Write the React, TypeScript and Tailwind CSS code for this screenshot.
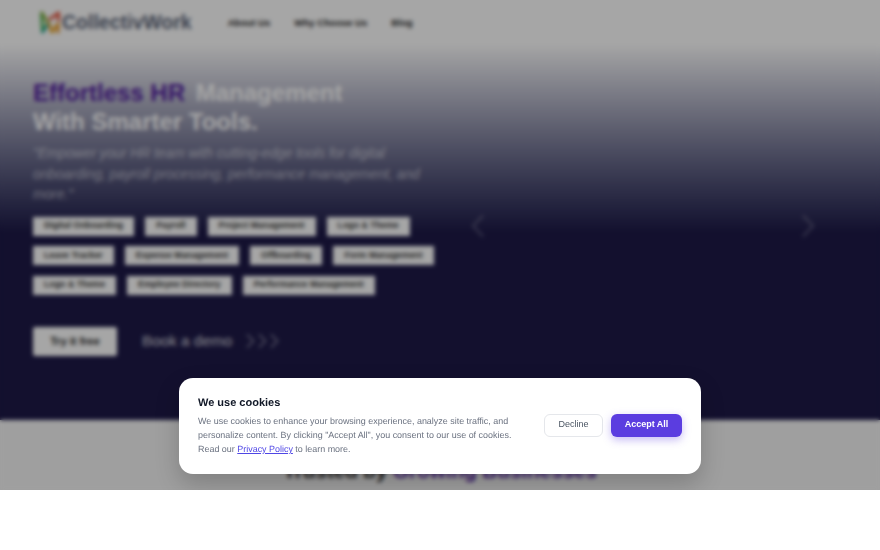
import React from "react";

const rows = [
  ["Digital Onboarding", "Payroll", "Project Management", "Logo & Theme"],
  ["Leave Tracker", "Expense Management", "Offboarding", "Form Management"],
  ["Logo & Theme", "Employee Directory", "Performance Management"],
];

function Logo() {
  return (
    <svg width="22" height="25" viewBox="0 0 22 25" fill="none" strokeWidth="3" strokeLinecap="round" strokeLinejoin="round">
      <path d="M2.5 3 L3.5 21" stroke="#4cb050" />
      <path d="M3.5 22 L9 14" stroke="#21a58f" />
      <path d="M3 3 L10 14" stroke="#8fae45" />
      <path d="M10 14 L13 22" stroke="#e0a030" />
      <path d="M13 22 L19 14" stroke="#eaa92f" />
      <path d="M19 14 L19 22" stroke="#e89a35" />
      <path d="M11 9 L19.5 3" stroke="#e2553f" />
      <path d="M19.5 3 L19.5 10" stroke="#e2553f" />
    </svg>
  );
}

function BigChevron({ flip }: { flip?: boolean }) {
  return (
    <svg width="14" height="26" viewBox="0 0 14 26" fill="none" stroke="currentColor" strokeWidth="2" className={flip ? "rotate-180" : ""}>
      <path d="M12 2.5 L2 13 L12 23.5" />
    </svg>
  );
}

export default function App() {
  return (
    <div className="min-h-[550px] bg-white font-['Liberation_Sans',Arial,sans-serif]">
      <div className="relative h-[490px] overflow-hidden bg-[#f5f5f5]">
        <header className="flex h-[44px] items-center bg-white pl-[39px]">
          <Logo />
          <span className="ml-px mt-px text-[19.5px] font-bold text-[#5b6478]">CollectivWork</span>
          <nav className="ml-9 mt-[3px] flex gap-6 text-[9.6px] font-bold text-[#222]">
            <span>About Us</span>
            <span>Why Choose Us</span>
            <span>Blog</span>
          </nav>
        </header>

        <section className="h-[376px] bg-gradient-to-b from-white from-0% to-[#1e1a48] to-[50%] pl-[33px] pt-[34px]">
          <div className="flex">
            <div className="w-[402px]">
              <h1 className="text-[24px] font-bold leading-[29px] text-white">
                <span className="mr-1 text-[#521fa0]">Effortless HR</span> Management
                <br />
                With Smarter Tools.
              </h1>
              <p className="mt-[8px] text-[13.75px] italic leading-[20.5px] text-white/60">
                "Empower your HR team with cutting-edge tools for digital onboarding, payroll processing, performance management, and more."
              </p>
              <div className="mt-[11px] flex flex-col gap-[10.5px]">
                {rows.map((row, i) => (
                  <div key={i} className="flex gap-[11px]">
                    {row.map((t) => (
                      <span key={t} className="flex h-[19px] items-center whitespace-nowrap bg-white px-[11px] text-[8.8px] font-bold text-[#333]">
                        {t}
                      </span>
                    ))}
                  </div>
                ))}
              </div>
              <div className="mt-[32px] flex items-center">
                <button className="h-[29px] w-[84px] rounded-[2px] bg-white text-[11px] font-bold text-[#222]">Try it free</button>
                <span className="ml-[25px] text-[15.3px] text-white/80">Book a demo</span>
                <span className="ml-[13px] flex text-white/50">
                  {[0, 1, 2].map((i) => (
                    <svg key={i} width="12" height="16" viewBox="0 0 12 16" fill="none" stroke="currentColor" strokeWidth="1.4">
                      <path d="M2 1.5 L8.5 8 L2 14.5" />
                    </svg>
                  ))}
                </span>
              </div>
            </div>
            <div className="ml-[36px] mt-[135px] flex h-[26px] w-[344px] justify-between text-white/25">
              <BigChevron />
              <BigChevron flip />
            </div>
          </div>
        </section>

        <section className="pt-[36px] text-center text-[20.6px] font-bold text-[#222]">
          Trusted by <span className="text-[#521fa0]">Growing Businesses</span>
        </section>

        <div className="absolute inset-0 bg-black/35 backdrop-blur-[2px]" />

        <div className="absolute left-[179px] top-[378px] flex h-[96px] w-[522px] items-center justify-between rounded-[14px] bg-white px-[19px] shadow-[0_10px_25px_rgba(0,0,0,0.2)] [text-rendering:geometricPrecision]">
          <div className="w-[322px]">
            <h2 className="text-[11px] font-bold leading-[14px] text-[#111827]">We use cookies</h2>
            <p className="mt-[4px] text-[8.95px] leading-[14px] text-[#6b7280]">
              We use cookies to enhance your browsing experience, analyze site traffic, and personalize content. By clicking "Accept All", you consent to our use of cookies. Read our{" "}
              <a className="text-[#4f46e5] underline">Privacy Policy</a> to learn more.
            </p>
          </div>
          <div className="mt-[-2px] flex gap-2">
            <button className="h-[23px] w-[59px] rounded-[6px] border border-[#e5e7eb] bg-white text-[9px] text-[#4b5563]">Decline</button>
            <button className="h-[23px] w-[71px] rounded-[6px] bg-[#5b3de0] text-[9px] font-bold text-white shadow-[0_3px_8px_rgba(91,61,224,0.35)]">Accept All</button>
          </div>
        </div>
      </div>
    </div>
  );
}
